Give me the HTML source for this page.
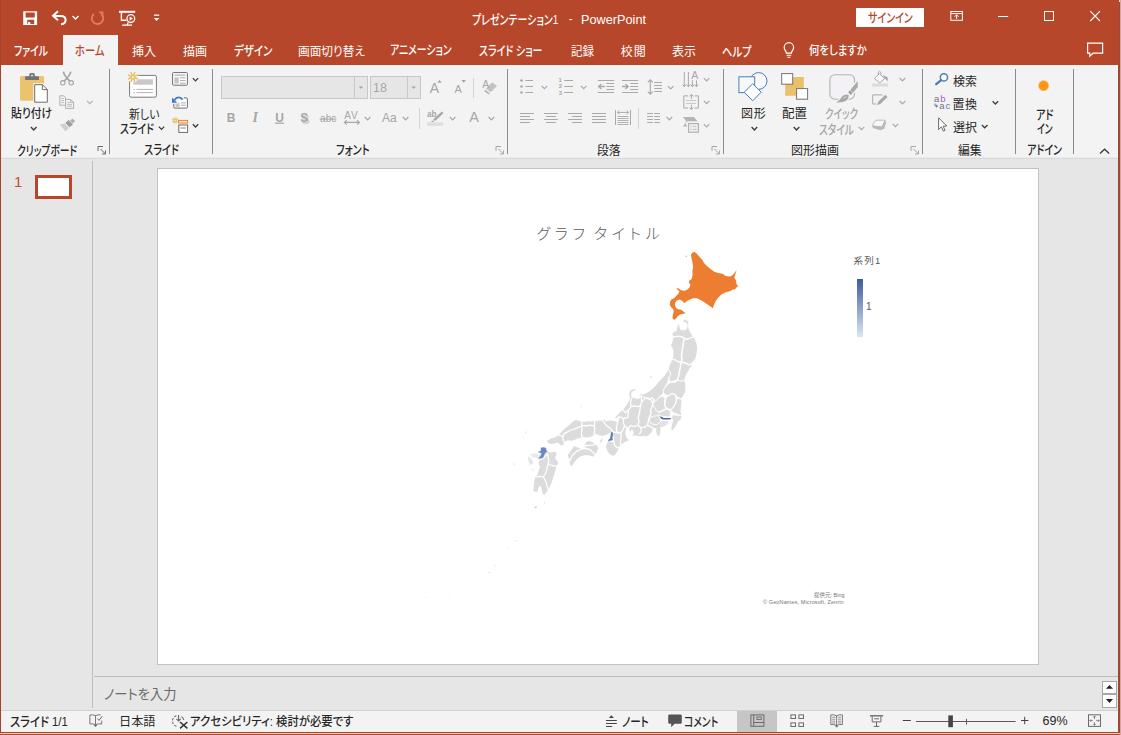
<!DOCTYPE html>
<html lang="ja">
<head>
<meta charset="utf-8">
<title>プレゼンテーション1 - PowerPoint</title>
<style>
html,body{margin:0;padding:0;background:#e6e6e6;}
body{width:1121px;height:735px;overflow:hidden;font-family:"Liberation Sans","Noto Sans CJK JP",sans-serif;}
#app{position:relative;width:1121px;height:735px;overflow:hidden;background:#e6e6e6;}
#app div,#app svg{position:absolute;}
.t{position:absolute;line-height:20px;font-weight:500;white-space:pre;transform-origin:0 0;font-feature-settings:"palt";}
#titlebar{left:0;top:0;width:1119px;height:65px;background:#b7472a;}
#tedge{left:1119px;top:2px;width:1px;height:63px;background:#9c4a36;}
#hometab{left:63px;top:35px;width:55px;height:31px;background:#f3f3f3;}
#ribbon{left:1px;top:65px;width:1117px;height:92px;background:#f3f3f3;}
#ribbonline{left:1px;top:157px;width:1117px;height:2px;background:#dadada;border-top:1px solid #ececec;box-sizing:border-box;}
.vsep{width:1px;top:69px;height:85px;background:#8a8a8a;}
.tsep{width:1px;background:#d4d4d4;}
#signin{left:856px;top:8px;width:68px;height:19px;background:#fff;}
#fontbox{left:221px;top:76px;width:147px;height:23px;background:#e6e6e6;border:1px solid #c8c8c8;box-sizing:border-box;}
#sizebox{left:370px;top:76px;width:51px;height:23px;background:#e6e6e6;border:1px solid #c8c8c8;box-sizing:border-box;}
#paneline{left:92px;top:161px;width:1px;height:547px;background:#bdbdbd;}
#slide{left:157px;top:168px;width:882px;height:497px;background:#fff;border:1px solid #c2c2c2;box-sizing:border-box;}
#thumb{left:35px;top:175px;width:37px;height:24px;background:#fff;border:3px solid #b7472a;box-sizing:border-box;}
#notesline{left:94px;top:676px;width:1024px;height:1px;background:#bdbdbd;}
#statusbar{left:1px;top:710px;width:1117px;height:22px;background:#f3f3f3;border-top:1px solid #d0d0d0;box-sizing:border-box;}
#viewsel{left:737px;top:711px;width:40px;height:21px;background:#c6c6c6;}
.sbtn{left:1102px;width:15px;background:#fff;border:1px solid #a8a8a8;box-sizing:border-box;}
#bl{left:0;top:0;width:1px;height:735px;background:#a8412a;}
#br{left:1118px;top:65px;width:2px;height:670px;background:#a4452f;}
#bb1{left:0;top:732px;width:1120px;height:1px;background:#a8452c;}
#bb2{left:0;top:733px;width:1120px;height:1px;background:#efc9ad;}
#bb3{left:0;top:734px;width:1120px;height:1px;background:#b0482d;}
#edge{left:1120px;top:0;width:1px;height:735px;background:#cdaaa4;}
</style>
</head>
<body>
<div id="app">
<div id="titlebar"></div>
<div id="tedge"></div>
<div id="hometab"></div>
<div id="ribbon"></div>
<div id="ribbonline"></div>
<div class="vsep" style="left:109px"></div>
<div class="vsep" style="left:212px"></div>
<div class="vsep" style="left:507px"></div>
<div class="vsep" style="left:723px"></div>
<div class="vsep" style="left:922px"></div>
<div class="vsep" style="left:1015px"></div>
<div class="vsep" style="left:1073px"></div>
<div class="tsep" style="left:473px;top:78px;height:20px"></div>
<div class="tsep" style="left:419px;top:108px;height:21px"></div>
<div class="tsep" style="left:638px;top:108px;height:21px"></div>
<div id="signin"></div>
<div id="fontbox"></div>
<div id="sizebox"></div>
<div id="paneline"></div>
<div id="slide"></div>
<div id="thumb"></div>
<div id="notesline"></div>
<div id="statusbar"></div>
<div id="viewsel"></div>
<div class="sbtn" style="top:681px;height:13px"></div>
<div class="sbtn" style="top:694px;height:14px"></div>
<svg width="1121" height="735" viewBox="0 0 1121 735" style="left:0;top:0">
<path d="M657.0 388.8L649.3 392.8L643.8 394.0L641.2 397.2L637.9 399.1L634.1 398.1L631.4 398.3L631.6 396.6L631.0 393.6L632.7 391.3L635.2 390.0L635.5 388.6L631.7 389.8L629.5 391.7L629.3 394.5L630.1 398.3L628.9 400.7L627.4 404.0L624.6 407.4L623.1 410.0L620.8 411.7L618.7 413.6L616.5 416.0L615.0 417.9L616.5 418.5L618.1 420.4L616.5 421.7L614.1 421.0L611.2 420.4L608.4 420.8L605.5 421.4L604.8 419.5L602.7 420.7L599.8 420.4L596.0 421.2L594.8 420.2L591.9 421.4L588.1 421.2L584.3 421.7L581.9 422.1L578.6 420.7L575.7 420.0L573.3 421.2L571.4 423.1L569.0 425.5L566.2 427.4L563.3 429.8L561.0 432.6L559.0 435.0L556.7 436.4L553.8 437.9L551.0 438.3L550.0 439.3L547.0 440.7L548.1 443.1L551.0 444.0L554.8 443.6L557.6 442.6L560.5 445.0L562.9 445.5L564.3 441.7L568.1 440.2L571.9 440.7L574.8 439.8L578.6 438.3L581.4 437.4L582.9 436.9L586.2 437.4L590.0 436.9L593.3 435.5L595.7 433.6L599.5 435.5L603.3 436.0L607.1 434.5L608.6 433.6L611.3 432.2L610.8 433.6L610.6 436.3L609.9 438.7L608.2 440.1L608.1 441.1L607.2 443.1L605.9 446.5L606.9 449.9L609.6 454.0L613.0 455.9L615.7 454.0L617.8 450.6L620.5 445.2L624.6 441.9L629.0 440.2L626.6 437.7L625.3 433.6L625.9 429.5L627.0 427.5L628.7 427.1L630.0 432.6L631.0 430.2L632.4 429.5L634.1 432.9L632.1 435.3L636.8 435.8L639.5 436.2L643.6 436.3L647.7 436.1L650.5 433.5L652.0 431.0L653.8 427.8L656.5 428.5L656.0 431.0L657.0 434.5L658.5 436.7L660.0 434.0L660.5 430.0L660.3 427.5L660.0 414.0L657.0 400.0z" fill="#dcdcdc" stroke="none" stroke-width="0" stroke-linejoin="round"/>
<path d="M567.8 454.9L570.1 452.0L572.4 448.5L574.2 446.0L577.6 447.4L580.5 448.8L583.4 447.9L585.1 445.3L585.7 442.2L588.6 441.0L592.7 442.2L594.4 444.5L597.3 445.6L598.1 448.5L596.7 452.0L595.0 454.9L592.7 456.8L590.7 455.7L585.7 455.0L580.8 456.2L577.1 458.9L573.8 463.1L571.5 466.4L570.1 464.7L569.2 461.8L570.3 459.5L568.4 457.8z" fill="#dcdcdc" stroke="none" stroke-width="0" stroke-linejoin="round"/>
<path d="M545.7 447.4L548.1 451.7L551.0 452.6L554.8 451.7L556.7 453.1L555.7 456.4L554.8 457.9L557.6 461.2L558.1 464.0L555.7 466.0L556.2 467.9L554.8 472.6L553.3 477.4L551.9 482.1L550.0 486.0L548.6 488.8L546.7 491.7L544.3 495.0L542.4 493.6L541.9 489.8L540.5 486.0L538.6 486.9L537.6 491.7L534.8 491.7L533.3 490.7L533.8 486.0L534.3 480.2L535.7 476.9L537.6 474.5L538.6 470.7L540.0 466.9L538.6 463.1L539.5 460.2L538.1 457.9L538.6 455.5L540.5 453.6L540.5 447.9L542.9 446.9z" fill="#dcdcdc" stroke="none" stroke-width="0" stroke-linejoin="round"/>
<path d="M660.0 421.3L664.0 421.0L667.9 421.0L667.8 424.3L665.0 425.8L662.0 427.3L660.0 426.8L659.5 424.5z" fill="#e2e2e2" stroke="none" stroke-width="0" stroke-linejoin="round"/>
<path d="M530.5 454.5L532.9 453.6L537.1 453.6L538.3 455.5L538.1 457.9L534.8 457.4L531.4 456.9z" fill="#e9e9e9" stroke="none" stroke-width="0" stroke-linejoin="round"/>
<path d="M528.1 456.4L530.0 457.4L531.4 459.3L533.3 461.7L532.4 464.0L530.5 465.0L529.0 463.1L528.1 460.2z" fill="#e6e6e6" stroke="none" stroke-width="0" stroke-linejoin="round"/>
<path d="M694.4 251.7L696.9 253.7L699.6 257.0L702.3 259.7L704.0 263.0L707.2 266.2L710.5 268.9L714.3 271.7L718.1 273.1L722.5 273.8L725.7 276.0L730.1 276.6L732.8 274.9L735.0 272.2L736.6 270.0L735.5 273.8L734.4 277.6L736.1 280.9L736.6 284.2L738.2 286.3L736.1 287.7L735.0 289.6L732.8 289.4L730.1 291.2L725.7 292.3L721.4 294.5L718.1 297.8L715.4 301.6L713.8 305.4L712.9 308.3L710.5 306.5L707.2 304.3L704.0 302.1L700.7 300.0L696.9 298.3L693.1 298.3L689.8 299.4L687.1 301.0L684.4 302.9L682.2 300.7L679.5 299.6L676.8 300.5L675.1 302.7L674.9 305.4L676.2 308.1L678.4 309.2L681.1 309.7L683.5 311.6L685.5 313.3L682.7 314.1L680.0 314.6L677.9 316.3L675.7 318.8L674.0 319.9L672.4 317.9L673.0 314.6L673.7 311.4L673.3 309.2L671.3 307.6L669.7 304.8L670.2 301.6L671.3 299.4L674.0 298.3L676.2 296.1L678.4 293.4L679.5 291.2L677.3 289.6L676.2 288.5L678.4 288.3L681.1 290.2L684.4 290.7L687.6 289.6L689.8 286.9L690.4 284.2L688.7 282.5L689.3 280.4L691.5 279.3L692.5 275.5L692.5 271.1L693.1 266.8L692.5 262.4L691.5 258.1L690.9 254.8L692.5 252.8z" fill="#ed7d31" stroke="none" stroke-width="0" stroke-linejoin="round"/>
<circle cx="686.3" cy="256.2" r="0.7" fill="#ed7d31" opacity="0.7"/>
<path d="M677.6 324.3L679.8 324.7L680.0 327.9L681.4 330.0L683.3 329.3L684.8 330.2L686.7 328.3L687.3 324.5L685.7 322.6L683.3 322.4L682.9 320.2L684.8 319.0L688.6 320.9L688.8 323.6L688.6 327.4L690.0 331.2L691.9 334.5L693.3 336.7L690.5 337.9L686.7 339.0L684.6 338.1L682.9 336.9L678.1 336.0L673.1 336.7L671.9 334.0L672.9 332.1L676.2 330.7L676.7 327.4z" fill="#dcdcdc" stroke="#fff" stroke-width="0.9" stroke-linejoin="round"/>
<path d="M673.1 337.1L678.1 336.4L682.9 337.5L684.0 338.6L683.1 342.6L682.4 347.4L681.7 352.1L681.2 356.0L681.6 359.8L680.8 361.7L678.1 361.4L675.2 359.6L672.1 358.8L672.9 355.0L673.0 351.2L671.9 347.4L670.3 345.3L671.4 343.6L672.4 340.0z" fill="#dcdcdc" stroke="#fff" stroke-width="0.9" stroke-linejoin="round"/>
<path d="M684.8 338.8L686.9 339.4L690.5 338.2L693.5 337.1L695.4 339.6L696.9 343.6L697.7 347.4L697.3 351.7L696.4 356.0L695.8 358.8L693.9 360.7L692.6 362.6L689.7 364.7L686.7 363.3L683.8 362.3L681.5 361.9L682.4 359.8L681.9 356.0L682.4 352.1L683.0 347.4L683.8 342.6z" fill="#dcdcdc" stroke="#fff" stroke-width="0.9" stroke-linejoin="round"/>
<path d="M671.7 359.4L675.0 360.1L677.9 362.0L680.6 362.6L680.2 366.4L679.2 371.2L678.3 376.0L677.0 379.8L671.4 381.7L669.0 380.5L669.3 376.0L670.7 372.7L667.8 370.0L669.5 364.5L671.0 361.4z" fill="#dcdcdc" stroke="#fff" stroke-width="0.9" stroke-linejoin="round"/>
<path d="M681.3 362.6L683.8 362.9L686.7 364.0L689.5 365.5L692.2 363.8L692.0 366.9L689.7 368.3L688.8 371.2L686.7 374.0L685.3 377.9L684.8 381.7L685.0 383.4L681.0 381.7L677.7 380.5L678.9 376.0L679.8 371.2L680.8 366.4z" fill="#dcdcdc" stroke="#fff" stroke-width="0.9" stroke-linejoin="round"/>
<path d="M663.8 389.0L667.6 384.3L671.0 382.2L675.4 382.6L677.7 380.3L681.0 381.2L685.0 380.7L685.7 384.3L685.9 389.0L685.0 392.9L682.7 397.1L681.7 398.8L677.6 397.6L675.4 394.6L671.9 393.3L668.6 395.5L665.0 395.0L663.3 392.4z" fill="#dcdcdc" stroke="#fff" stroke-width="0.9" stroke-linejoin="round"/>
<path d="M677.3 398.2L681.9 399.3L681.9 403.3L681.2 408.1L681.0 411.9L682.2 415.7L678.1 414.6L674.3 413.0L670.7 410.8L673.3 407.6L675.8 403.3L676.6 399.5z" fill="#dcdcdc" stroke="#fff" stroke-width="0.9" stroke-linejoin="round"/>
<path d="M668.6 395.9L671.9 393.8L675.2 395.0L676.2 398.6L675.4 403.3L673.0 407.3L670.3 409.8L667.1 408.1L665.0 405.4L665.5 400.5L666.2 397.6z" fill="#dcdcdc" stroke="#fff" stroke-width="0.9" stroke-linejoin="round"/>
<path d="M652.4 403.3L655.2 401.4L659.0 397.6L662.9 396.2L665.0 398.1L664.6 401.4L664.4 405.7L666.2 408.6L662.9 410.0L659.0 411.9L656.2 411.0L655.2 407.6L652.9 406.2z" fill="#dcdcdc" stroke="#fff" stroke-width="0.9" stroke-linejoin="round"/>
<path d="M659.5 412.4L663.3 410.5L666.7 409.0L670.0 410.5L670.7 413.8L669.5 417.1L665.7 416.7L661.4 416.2L658.1 414.8z" fill="#dcdcdc" stroke="#fff" stroke-width="0.9" stroke-linejoin="round"/>
<path d="M671.4 417.6L672.9 414.8L678.1 415.2L682.4 416.2L681.0 419.5L678.1 421.9L676.7 425.2L674.8 428.1L672.4 430.5L671.0 431.0L671.0 427.1L671.9 423.3L672.9 420.5z" fill="#dcdcdc" stroke="#fff" stroke-width="0.9" stroke-linejoin="round"/>
<path d="M650.0 417.6L653.3 416.2L657.6 415.7L660.0 417.6L660.5 420.5L659.0 423.3L656.2 424.8L653.3 424.3L650.5 423.3L649.5 420.5z" fill="#dcdcdc" stroke="#fff" stroke-width="0.9" stroke-linejoin="round"/>
<path d="M667.6 370.0L669.0 370.0L670.7 374.3L668.6 378.1L667.8 382.4L663.8 389.0L663.1 393.8L659.0 397.4L655.7 401.0L652.2 402.9L649.5 398.1L645.7 397.6L641.9 396.2L638.1 395.5L639.0 394.3L643.8 393.8L648.6 391.4L652.4 388.6L656.2 384.8L658.6 381.4L662.4 377.6L665.7 373.8z" fill="#dcdcdc" stroke="#fff" stroke-width="0.9" stroke-linejoin="round"/>
<path d="M659.5 416.5L661.4 416.7L663.8 417.9L667.6 418.0L671.0 417.9L670.7 419.3L667.6 419.5L663.8 419.6L661.4 419.0z" fill="#4a68a8" stroke="none" stroke-width="0" stroke-linejoin="round"/>
<path d="M641.2 397.2L641.7 401.7L640.6 405.2L637.9 406.7L634.1 405.8L631.2 406.7" fill="none" stroke="#fff" stroke-width="1.3" stroke-linejoin="round"/>
<path d="M631.4 398.3L630.5 403.1L631.2 406.7L628.4 410.0L625.5 412.6L623.0 410.1" fill="none" stroke="#fff" stroke-width="1.3" stroke-linejoin="round"/>
<path d="M628.4 410.0L627.9 417.4L623.4 418.5L621.0 417.4L618.9 416.9L617.1 418.5L616.5 421.7" fill="none" stroke="#fff" stroke-width="1.3" stroke-linejoin="round"/>
<path d="M640.6 405.2L640.0 409.3L639.3 413.6L638.1 417.4L639.0 421.2L638.1 425.2" fill="none" stroke="#fff" stroke-width="1.3" stroke-linejoin="round"/>
<path d="M641.7 401.7L645.5 397.9L649.3 399.5L652.2 397.9L654.3 400.2L653.1 400.7L652.4 406.0L650.5 410.0L651.0 413.6L649.3 417.4L648.2 421.2L647.6 425.2" fill="none" stroke="#fff" stroke-width="1.3" stroke-linejoin="round"/>
<path d="M638.1 425.2L640.8 427.7L644.1 427.4L647.6 425.2L651.2 426.9L654.3 429.6" fill="none" stroke="#fff" stroke-width="1.3" stroke-linejoin="round"/>
<path d="M638.1 425.2L634.1 426.7L630.8 425.5L629.3 427.6L628.4 428.3" fill="none" stroke="#fff" stroke-width="1.3" stroke-linejoin="round"/>
<path d="M640.8 427.7L641.2 431.2L639.3 434.5" fill="none" stroke="#fff" stroke-width="1.3" stroke-linejoin="round"/>
<path d="M623.4 418.5L623.4 423.1L624.6 426.1L628.4 428.3L626.3 429.8" fill="none" stroke="#fff" stroke-width="1.3" stroke-linejoin="round"/>
<path d="M624.6 426.1L623.1 429.6L621.2 432.4" fill="none" stroke="#fff" stroke-width="1.3" stroke-linejoin="round"/>
<path d="M618.9 416.9L616.5 426.9L616.5 430.9L618.7 433.1L621.2 432.4L621.0 438.3L620.3 443.1L621.5 446.4" fill="none" stroke="#fff" stroke-width="1.3" stroke-linejoin="round"/>
<path d="M603.1 421.0L605.0 424.0L607.0 426.1L609.8 427.7L611.7 429.8L613.6 432.1L616.0 432.6L618.7 433.1" fill="none" stroke="#fff" stroke-width="1.3" stroke-linejoin="round"/>
<path d="M613.1 436.4L613.6 441.2L615.0 446.0L617.9 447.9L620.6 446.9" fill="none" stroke="#fff" stroke-width="1.3" stroke-linejoin="round"/>
<path d="M610.3 441.4L613.6 441.4" fill="none" stroke="#fff" stroke-width="1.3" stroke-linejoin="round"/>
<path d="M594.8 420.4L594.6 424.0L594.3 426.0L594.8 429.8L594.0 433.6L594.3 434.7" fill="none" stroke="#fff" stroke-width="1.3" stroke-linejoin="round"/>
<path d="M594.3 426.0L590.0 425.2L586.2 426.0L581.9 425.5L581.9 422.3" fill="none" stroke="#fff" stroke-width="1.3" stroke-linejoin="round"/>
<path d="M581.9 425.5L581.9 429.8L581.4 433.6L582.2 437.2" fill="none" stroke="#fff" stroke-width="1.3" stroke-linejoin="round"/>
<path d="M581.9 425.5L578.6 427.4L574.8 428.8L571.0 430.0L567.1 432.1L564.3 433.6L562.9 436.4L560.0 435.5L558.8 435.3" fill="none" stroke="#fff" stroke-width="1.3" stroke-linejoin="round"/>
<path d="M562.9 436.4L563.3 440.2L564.3 442.0" fill="none" stroke="#fff" stroke-width="1.3" stroke-linejoin="round"/>
<path d="M547.6 453.6L548.1 457.4L549.0 461.2L548.1 464.0L551.9 465.5L555.9 466.1" fill="none" stroke="#fff" stroke-width="1.3" stroke-linejoin="round"/>
<path d="M548.1 464.0L547.1 467.9L546.2 471.7L544.8 474.5L543.3 476.9L539.5 476.4L536.2 476.9" fill="none" stroke="#fff" stroke-width="1.3" stroke-linejoin="round"/>
<path d="M543.3 476.9L545.2 480.2L546.7 484.0L547.6 487.9L548.3 489.8" fill="none" stroke="#fff" stroke-width="1.3" stroke-linejoin="round"/>
<path d="M539.5 460.0L543.3 458.5L547.6 453.6" fill="none" stroke="#fff" stroke-width="1.3" stroke-linejoin="round"/>
<path d="M611.3 432.2L613.0 432.6L612.7 435.6L612.3 438.4L612.9 439.7L611.0 440.4L608.1 440.7L608.2 440.1L609.9 438.7L610.6 436.3L610.8 433.6z" fill="#5b7cb8" stroke="none" stroke-width="0" stroke-linejoin="round"/>
<path d="M540.5 447.7L542.9 446.9L546.0 447.4L546.7 450.2L547.9 451.9L546.0 452.6L544.8 454.5L543.5 457.9L541.4 458.5L538.6 459.3L538.1 458.1L540.3 456.0L541.2 453.4L539.0 452.8L537.1 452.4L538.6 451.3L540.5 450.7z" fill="#6888c0" stroke="#fff" stroke-width="0.6" stroke-linejoin="round"/>
<path d="M584.9 445.6L589.8 445.3L594.6 444.8" fill="none" stroke="#fff" stroke-width="1.3" stroke-linejoin="round"/>
<path d="M569.2 461.8L572.4 455.5L576.8 451.1L582.3 448.9L585.1 448.5L584.9 445.6" fill="none" stroke="#fff" stroke-width="1.3" stroke-linejoin="round"/>
<path d="M585.1 448.5L589.8 449.5L593.8 453.2L595.0 454.9" fill="none" stroke="#fff" stroke-width="1.3" stroke-linejoin="round"/>
<ellipse cx="601.3" cy="440.7" rx="0.9" ry="2.1" fill="#dcdcdc" transform="rotate(25 601.3 440.7)"/>
<ellipse cx="535.7" cy="507.3" rx="1.3" ry="1.1" fill="#d4d4d4" opacity="0.9"/>
<ellipse cx="544.4" cy="503" rx="0.6" ry="1.2" fill="#d4d4d4" opacity="0.5"/>
<ellipse cx="515.7" cy="540.6" rx="1.2" ry="0.7" fill="#d4d4d4" opacity="0.5"/>
<ellipse cx="508.6" cy="548.6" rx="0.8" ry="0.6" fill="#d4d4d4" opacity="0.4"/>
<ellipse cx="495.7" cy="565.7" rx="0.9" ry="0.7" fill="#d4d4d4" opacity="0.45"/>
<ellipse cx="489" cy="572.6" rx="1.3" ry="0.8" fill="#d4d4d4" opacity="0.5"/>
<ellipse cx="425.7" cy="597.1" rx="1" ry="0.6" fill="#d4d4d4" opacity="0.35"/>
<ellipse cx="448.6" cy="594.3" rx="0.9" ry="0.5" fill="#d4d4d4" opacity="0.3"/>
<ellipse cx="514.3" cy="464.3" rx="1" ry="1.2" fill="#d4d4d4" opacity="0.35"/>
<ellipse cx="581.4" cy="406.5" rx="1" ry="0.8" fill="#d4d4d4" opacity="0.4"/>
<ellipse cx="525.8" cy="432.5" rx="0.7" ry="1.8" fill="#d4d4d4" opacity="0.4"/>
<ellipse cx="523.5" cy="437.5" rx="0.6" ry="1" fill="#d4d4d4" opacity="0.3"/>
<ellipse cx="651" cy="377.2" rx="0.9" ry="1.8" fill="#d4d4d4" opacity="0.45"/>
<ellipse cx="529" cy="465" rx="0.7" ry="0.7" fill="#d4d4d4" opacity="0.3"/>
<ellipse cx="533" cy="470" rx="0.8" ry="1.2" fill="#d4d4d4" opacity="0.4"/>
<ellipse cx="531.5" cy="459.5" rx="0.7" ry="0.7" fill="#d4d4d4" opacity="0.3"/>
<defs><linearGradient id="lg" x1="0" y1="0" x2="0" y2="1"><stop offset="0" stop-color="#3b5c9f"/><stop offset="1" stop-color="#dde5f3"/></linearGradient></defs><rect x="857" y="279" width="6" height="58" fill="url(#lg)"/>
</svg>
<svg width="1121" height="735" viewBox="0 0 1121 735" style="left:0;top:0">
<path d="M23.2 11.2h13.9v13.9h-13.9z M25.6 12.4v5h9.2v-5z M27.3 19.8v4.3h6.9v-4.3z" fill="#fff" fill-rule="evenodd"/>
<rect x="28.1" y="22" width="2.2" height="2.2" fill="#fff"/>
<path d="M58 11.3L53 15.8L58 20.2" fill="none" stroke="#fff" stroke-width="2" stroke-linejoin="miter"/>
<path d="M53.6 15.9H60.6C64 15.9 65.6 17.8 65.6 20C65.6 22.2 64 24 61 24.3" fill="none" stroke="#fff" stroke-width="2"/>
<path d="M72.5 16.0L75.5 19.0L78.5 16.0" fill="none" stroke="#fff" stroke-width="1.4"/>
<path d="M93.9 13.9A5.7 5.7 0 1 0 101.6 14.3" fill="none" stroke="#e27a60" stroke-width="1.9"/>
<path d="M98.4 11.6H103.4V16.6z" fill="#e27a60"/>
<path d="M119 11.8H135.2" stroke="#fff" stroke-width="2" fill="none"/>
<path d="M121.4 12.5V20.2H126.5" stroke="#fff" stroke-width="1.4" fill="none"/>
<circle cx="130.8" cy="18.6" r="3.9" fill="none" stroke="#fff" stroke-width="1.3"/>
<path d="M129.6 16.4L133 18.6L129.6 20.8z" fill="#fff"/>
<path d="M128.2 22.6L127 25.2 M122.2 25.2H132" stroke="#fff" stroke-width="1.3" fill="none"/>
<path d="M154 15.2H159.2" stroke="#fff" stroke-width="1.3"/><path d="M153.8 17.9H159.4L156.6 21.1z" fill="#fff"/>
<rect x="950.8" y="11.5" width="11.6" height="8.8" fill="none" stroke="#fff" stroke-width="1"/>
<path d="M950.8 13.6H962.4 M956.6 19V15 M954.6 16.8L956.6 14.8L958.6 16.8" fill="none" stroke="#fff" stroke-width="1"/>
<path d="M998 16.5H1008.2" stroke="#fff" stroke-width="1"/>
<rect x="1044.5" y="11.5" width="9" height="9" fill="none" stroke="#fff" stroke-width="1"/>
<path d="M1090.2 11.2L1100 21 M1100 11.2L1090.2 21" stroke="#fff" stroke-width="1.1"/>
<path d="M1087.6 43.2H1102.6V53.2H1093L1089.8 56.2V53.2H1087.6z" fill="none" stroke="#fff" stroke-width="1.2"/>
<path d="M786.4 53.2C786.4 51 784.2 50.2 784.2 47.4A4.7 4.7 0 0 1 793.6 47.4C793.6 50.2 791.4 51 791.4 53.2z" fill="none" stroke="#fff" stroke-width="1.2"/>
<path d="M786.6 55.2H791.2 M787.4 57.2H790.4" stroke="#fff" stroke-width="1.1"/>
<rect x="20" y="75.9" width="24.1" height="24.9" rx="1.6" fill="#ebc36f"/>
<path d="M25.1 80V77.2Q25.1 76.2 26.1 76.2H29.3V74.6Q29.3 73.1 30.8 73.1H33.3Q34.8 73.1 34.8 74.6V76.2H38Q39 76.2 39 77.2V80z" fill="#737373"/>
<circle cx="32" cy="75.5" r="1" fill="#ebe6dc"/>
<path d="M33.2 83.2H43L48.8 89V103.7H33.2z" fill="#f3f3f3"/>
<path d="M34.7 84.7H42.4L47.3 89.6V102.2H34.7z" fill="#fff" stroke="#6d6d6d" stroke-width="1"/>
<path d="M42.4 84.7V89.6H47.3" fill="none" stroke="#6d6d6d" stroke-width="1"/>
<path d="M30.9 127.1L33.7 129.9L36.5 127.1" fill="none" stroke="#3b3b3b" stroke-width="1.4"/>
<circle cx="62.8" cy="82.8" r="2.2" fill="none" stroke="#a6a6a6" stroke-width="1.1"/><circle cx="71.2" cy="82.8" r="2.2" fill="none" stroke="#a6a6a6" stroke-width="1.1"/>
<path d="M63.4 71.6Q64 75.5 69.8 81.2 M70.8 71.6Q70 75.5 64.2 81.2" fill="none" stroke="#a6a6a6" stroke-width="1.7"/>
<path d="M59.8 95.8H63.6L65.6 97.8V105.2H59.8z" fill="#f3f3f3" stroke="#b0b0b0" stroke-width="1"/>
<path d="M61.3 98.5H64 M61.3 100.5H64 M61.3 102.5H64" stroke="#b8b8b8" stroke-width="0.9"/>
<path d="M65.6 99.4H70.6L73.6 102.4V108.4H65.6z" fill="#f3f3f3" stroke="#b0b0b0" stroke-width="1"/>
<path d="M70.6 99.4V102.4H73.6" fill="none" stroke="#b0b0b0" stroke-width="0.9"/>
<path d="M67.3 102.6H70 M67.3 104.4H72 M67.3 106.2H72" stroke="#b8b8b8" stroke-width="0.9"/>
<path d="M87.0 100.8L89.8 103.6L92.6 100.8" fill="none" stroke="#b0b0b0" stroke-width="1.2"/>
<path d="M72.4 118.4L75.2 121L72.8 123.4L70 120.8z" fill="#b0b0b0"/>
<path d="M68.6 120L73 124.4L69.4 127.2L65.4 123z" fill="#9d9d9d"/>
<path d="M64.6 123.6L68.8 128L65.6 131.6L59.8 124.6z" fill="#cfcfcf"/>
<path d="M98 151V146.5H103 M100.5 149L105.5 154 M102 154H105.5V150.5" fill="none" stroke="#6a6a6a" stroke-width="1"/>
<rect x="129.6" y="75.4" width="26.8" height="21.8" rx="1.6" fill="#fff" stroke="#7a7a7a" stroke-width="1"/>
<rect x="133.3" y="79.3" width="19.6" height="5.4" fill="#c8c8c8"/>
<path d="M133.4 89.4H135 M136.4 89.4H152.9 M133.4 92.6H135 M136.4 92.6H152.9" stroke="#b4b4b4" stroke-width="1"/>
<circle cx="132.9" cy="77" r="5.6" fill="#f3f3f3"/>
<path d="M134.47 77.65L137.80 79.03M133.55 78.57L134.93 81.90M132.25 78.57L130.87 81.90M131.33 77.65L128.00 79.03M131.33 76.35L128.00 74.97M132.25 75.43L130.87 72.10M133.55 75.43L134.93 72.10M134.47 76.35L137.80 74.97" stroke="#e8c16b" stroke-width="1.5" fill="none"/>
<circle cx="132.9" cy="77" r="1.7" fill="none" stroke="#e8c16b" stroke-width="1.35"/>
<path d="M158.8 126.6L161.5 129.4L164.2 126.6" fill="none" stroke="#3b3b3b" stroke-width="1.3"/>
<rect x="172.6" y="72.6" width="14.8" height="12.6" rx="0.8" fill="#fff" stroke="#6d6d6d" stroke-width="1"/>
<rect x="174.4" y="74.4" width="11.2" height="1.7" fill="#c4c4c4"/><rect x="174.4" y="77.4" width="4.3" height="6.2" fill="#c4c4c4"/>
<path d="M180 77.8H185.6 M180 80.6H185.6 M180 83.2H185.6" stroke="#a0a0a0" stroke-width="0.9"/>
<path d="M192.8 78.1L195.5 80.9L198.2 78.1" fill="none" stroke="#3b3b3b" stroke-width="1.3"/>
<rect x="173.8" y="97.9" width="13.6" height="10.2" rx="0.8" fill="#fff" stroke="#6d6d6d" stroke-width="1"/>
<rect x="175.4" y="102.7" width="4.2" height="4.2" fill="#c4c4c4"/>
<path d="M181 102.9H185.8 M181 105.2H185.8" stroke="#a0a0a0" stroke-width="0.9"/>
<path d="M171 95.6H184V100.6H178V103.8H171z" fill="#f3f3f3"/>
<path d="M182.6 99.6C180.6 96.6 176.6 96.4 174.6 100" fill="none" stroke="#3c78c8" stroke-width="1.8"/>
<path d="M172 97.6V102.8H177.2z" fill="#3c78c8"/>
<path d="M176.22 120.92L178.34 121.80M175.62 121.52L176.50 123.64M174.78 121.52L173.90 123.64M174.18 120.92L172.06 121.80M174.18 120.08L172.06 119.20M174.78 119.48L173.90 117.36M175.62 119.48L176.50 117.36M176.22 120.08L178.34 119.20" stroke="#e8c16b" stroke-width="1.1" fill="none"/>
<circle cx="175.2" cy="120.5" r="1.1" fill="none" stroke="#e8c16b" stroke-width="0.99"/>
<rect x="178.6" y="120.4" width="9" height="2.6" fill="#fdeebb" stroke="#e8823a" stroke-width="1"/>
<rect x="178.8" y="125" width="8.8" height="7.4" fill="#fff" stroke="#6d6d6d" stroke-width="1"/>
<rect x="180.4" y="127" width="5.6" height="2" fill="#c4c4c4"/>
<path d="M192.8 124.2L195.5 127.0L198.2 124.2" fill="none" stroke="#3b3b3b" stroke-width="1.3"/>
<path d="M358.6 86.4H363.2L360.9 88.9z" fill="#a6a6a6"/><path d="M354.5 77V98" stroke="#c8c8c8" stroke-width="1"/>
<path d="M411.4 86.4H416L413.7 88.9z" fill="#a6a6a6"/><path d="M407.5 77V98" stroke="#c8c8c8" stroke-width="1"/>
<path d="M274.9 123.2H284" stroke="#a6a6a6" stroke-width="1.2"/>
<path d="M319.6 119.1H336.4" stroke="#a6a6a6" stroke-width="1"/>
<path d="M344.4 122.4H359.4 M346.8 120.2L344.4 122.4L346.8 124.6 M357 120.2L359.4 122.4L357 124.6" fill="none" stroke="#a6a6a6" stroke-width="1.1"/>
<path d="M364.8 117.0L367.6 119.8L370.4 117.0" fill="none" stroke="#a6a6a6" stroke-width="1.2"/>
<path d="M402.8 117.0L405.6 119.8L408.4 117.0" fill="none" stroke="#a6a6a6" stroke-width="1.2"/>
<path d="M437.2 82.7L439.55 80L441.9 82.7z" fill="#a6a6a6"/>
<path d="M461.3 80L466 80L463.65 82.7z" fill="#a6a6a6"/>
<path d="M492.2 82.3L497 86L490.6 92.2L486 88.6z" fill="#c2c2c2"/>
<path d="M485.4 89.8L489.8 93.4L488.6 94.6L484.2 91z" fill="#b4b4b4"/>
<path d="M441.8 111.6L443.4 113.2L435 121L433.2 119.4z" fill="#a6a6a6"/><path d="M432.6 120.2L434.4 121.8L431 122z" fill="#a6a6a6"/>
<rect x="427.2" y="122.4" width="15.8" height="3.4" fill="#dedede"/>
<path d="M449.8 117.0L452.6 119.8L455.4 117.0" fill="none" stroke="#a6a6a6" stroke-width="1.2"/>
<path d="M488.6 117.0L491.4 119.8L494.2 117.0" fill="none" stroke="#a6a6a6" stroke-width="1.2"/>
<path d="M496 151V146.5H501 M498.5 149L503.5 154 M500 154H503.5V150.5" fill="none" stroke="#a6a6a6" stroke-width="1"/>
<circle cx="521.5" cy="80.5" r="1.3" fill="#a9a9a9"/>
<circle cx="521.5" cy="86.5" r="1.3" fill="#a9a9a9"/>
<circle cx="521.5" cy="92.5" r="1.3" fill="#a9a9a9"/>
<path d="M525.4 80.5H533 M525.4 86.5H533 M525.4 92.5H533" stroke="#a9a9a9" stroke-width="1"/>
<path d="M541.6 85.8L544.4 88.6L547.2 85.8" fill="none" stroke="#a9a9a9" stroke-width="1.2"/>
<path d="M564.2 80.5H573 M564.2 86.5H573 M564.2 92.5H573" stroke="#a9a9a9" stroke-width="1"/>
<path d="M580.9 85.8L583.7 88.6L586.5 85.8" fill="none" stroke="#a9a9a9" stroke-width="1.2"/>
<path d="M597.8 80.5H614.2 M597.8 92.5H614.2" stroke="#a9a9a9" stroke-width="1"/>
<path d="M606.3 83.5H614.2 M606.3 86.5H614.2 M606.3 89.5H614.2" stroke="#a9a9a9" stroke-width="1"/>
<path d="M604.8 86.5H598.8 M601.4 83.9L598.6 86.5L601.4 89.1" fill="none" stroke="#a9a9a9" stroke-width="1.3"/>
<path d="M622 80.5H638.2 M622 92.5H638.2" stroke="#a9a9a9" stroke-width="1"/>
<path d="M630.2 83.5H638.2 M630.2 86.5H638.2 M630.2 89.5H638.2" stroke="#a9a9a9" stroke-width="1"/>
<path d="M622 86.5H628 M625.4 83.9L628.2 86.5L625.4 89.1" fill="none" stroke="#a9a9a9" stroke-width="1.3"/>
<path d="M650.3 79.8V94.2 M647.8 82.4L650.3 79.8L652.8 82.4 M647.8 91.6L650.3 94.2L652.8 91.6" fill="none" stroke="#a9a9a9" stroke-width="1.1"/>
<path d="M654.3 82.5H661.9 M654.3 85.5H661.9 M654.3 88.5H661.9 M654.3 91.5H661.9" stroke="#a9a9a9" stroke-width="1"/>
<path d="M667.9 86.1L670.7 88.9L673.5 86.1" fill="none" stroke="#a9a9a9" stroke-width="1.2"/>
<path d="M684.3 72V86.5 M688.4 72V86.5 M692.4 80.3V86.5 M696.5 80.3V86.5" stroke="#a9a9a9" stroke-width="1"/>
<path d="M682.6999999999999 84.6L684.3 86.8L685.9 84.6" fill="none" stroke="#a9a9a9" stroke-width="1"/>
<path d="M686.8 84.6L688.4 86.8L690.0 84.6" fill="none" stroke="#a9a9a9" stroke-width="1"/>
<path d="M690.8 84.6L692.4 86.8L694.0 84.6" fill="none" stroke="#a9a9a9" stroke-width="1"/>
<path d="M694.9 84.6L696.5 86.8L698.1 84.6" fill="none" stroke="#a9a9a9" stroke-width="1"/>
<path d="M703.8 78.1L706.6 80.9L709.4 78.1" fill="none" stroke="#a9a9a9" stroke-width="1.2"/>
<path d="M688 95.9H683.8V108H688 M694.6 95.9H698.4V108H694.6" fill="none" stroke="#a9a9a9" stroke-width="1"/>
<path d="M691.4 94.4V99 M689.4 96.4L691.4 94.4L693.4 96.4 M691.4 104.6V109.6 M689.4 107.6L691.4 109.6L693.4 107.6" fill="none" stroke="#a9a9a9" stroke-width="1"/>
<path d="M686 100.5H696.2 M686 103.4H696.2" stroke="#c8c8c8" stroke-width="1"/>
<path d="M703.8 100.9L706.6 103.7L709.4 100.9" fill="none" stroke="#a9a9a9" stroke-width="1.2"/>
<path d="M683 117.1H693.8L697.6 121.2H687.4L685.4 123.6L687.4 126.5H682.9L686.4 121.6z" fill="#b4b4b4"/>
<rect x="688.6" y="123.6" width="9.8" height="8.6" fill="#f1ebf1" stroke="#a9a9a9" stroke-width="1"/>
<path d="M690.6 126.4H691.8 M693 126.4H696.4 M690.6 129.4H691.8 M693 129.4H696.4" stroke="#c4b8c4" stroke-width="0.9"/>
<path d="M703.8 124.2L706.6 127.0L709.4 124.2" fill="none" stroke="#a9a9a9" stroke-width="1.2"/>
<path d="M520 113.5H534 M520 119.5H534" stroke="#a9a9a9" stroke-width="1"/>
<path d="M520 116.5H530 M520 122.5H530" stroke="#a9a9a9" stroke-width="1"/>
<path d="M544 113.5H557.8 M544 119.5H557.8" stroke="#a9a9a9" stroke-width="1"/>
<path d="M546 116.5H555.8 M546 122.5H555.8" stroke="#a9a9a9" stroke-width="1"/>
<path d="M568 113.5H582 M568 119.5H582" stroke="#a9a9a9" stroke-width="1"/>
<path d="M572 116.5H582 M572 122.5H582" stroke="#a9a9a9" stroke-width="1"/>
<path d="M592 113.5H606 M592 116.5H606 M592 119.5H606 M592 122.5H606" stroke="#a9a9a9" stroke-width="1"/>
<path d="M615.5 110V125 M630.5 110V125" stroke="#a9a9a9" stroke-width="1"/>
<path d="M617.4 112.4H628.6 M619.4 110.6L617.4 112.4L619.4 114.2 M626.6 110.6L628.6 112.4L626.6 114.2" fill="none" stroke="#a9a9a9" stroke-width="1"/>
<path d="M617.4 116.5H628.6 M617.4 118.5H628.6 M617.4 120.5H628.6 M617.4 122.5H628.6 M617.4 124.5H628.6" stroke="#a9a9a9" stroke-width="0.9"/>
<path d="M647.1 113.5H652.9 M647.1 116.5H652.9 M647.1 119.5H652.9 M647.1 122.5H652.9" stroke="#a9a9a9" stroke-width="1"/>
<path d="M654.3 113.5H660 M654.3 116.5H660 M654.3 119.5H660 M654.3 122.5H660" stroke="#a9a9a9" stroke-width="1"/>
<path d="M666.6 117.0L669.4 119.8L672.2 117.0" fill="none" stroke="#a9a9a9" stroke-width="1.2"/>
<path d="M712 151V146.5H717 M714.5 149L719.5 154 M716 154H719.5V150.5" fill="none" stroke="#a6a6a6" stroke-width="1"/>
<circle cx="758.6" cy="81" r="8.4" fill="#f8f8f8" stroke="#4a7ebb" stroke-width="1"/>
<rect x="738.9" y="76.8" width="15.8" height="15.8" fill="#f8f8f8" stroke="#4a7ebb" stroke-width="1"/>
<path d="M752.7 83.8L761.2 92.2L752.7 100.8L744.2 92.2z" fill="#fcfcfc" stroke="#4a7ebb" stroke-width="1"/>
<path d="M751.6 127.1L754.4 129.9L757.2 127.1" fill="none" stroke="#3b3b3b" stroke-width="1.4"/>
<path d="M789 77H803.8V92H796V95.7H785.2V81H789z" fill="#ebc06d"/>
<rect x="781.7" y="73.6" width="11" height="10.6" fill="#fff" stroke="#737373" stroke-width="1"/>
<rect x="796.6" y="88.6" width="11" height="10.6" fill="#fff" stroke="#737373" stroke-width="1"/>
<path d="M793.7 127.1L796.5 129.9L799.3 127.1" fill="none" stroke="#3b3b3b" stroke-width="1.4"/>
<rect x="829.9" y="74.7" width="24.6" height="24.5" rx="5" fill="#f4f1f6" stroke="#b4b4b4" stroke-width="1.1"/>
<path d="M857.7 80.9L857.8 87L852.8 92.9L850.8 94.8L848.8 95.4L847.5 98.9Q845 101.6 842.7 101.9L836.2 102.7Q840 100 840.6 98.6Q842 96 846.2 94.3L848.2 92.2L850.1 90.2z" fill="#f3f3f3" stroke="#f3f3f3" stroke-width="2.6" stroke-linejoin="round"/>
<path d="M857.7 80.9L857.8 87L852.8 92.9L850.1 90.2z" fill="#a9a9a9"/>
<path d="M849.8 90.6L852.4 93.2L850.8 94.9L848.2 92.3z" fill="#9a9a9a"/>
<path d="M836.2 102.7L840.1 99.2Q841.6 96.4 844 95Q846.6 93.8 848.9 95.2L847.9 99Q846 101.4 842.7 102z" fill="#a9a9a9"/>
<path d="M843.4 98.2Q845.4 98 846.2 96.2" fill="none" stroke="#e4e4e4" stroke-width="0.8"/>
<path d="M858.7 126.8L861.5 129.6L864.3 126.8" fill="none" stroke="#a9a9a9" stroke-width="1.2"/>
<path d="M879.4 73.6L884.6 78.6L879.8 82.8L874.4 78.4z" fill="#f8f8f8" stroke="#a9a9a9" stroke-width="1"/>
<path d="M878.2 74.6Q878 71 879.6 71.2Q881 71.4 881 74.4" fill="none" stroke="#a9a9a9" stroke-width="0.9"/>
<path d="M882.8 75L887.2 77Q888.4 78.4 887.6 81.6Q886.4 79.4 884.8 78.6z" fill="#a6a6a6"/>
<rect x="872.1" y="83.5" width="15.9" height="3.1" fill="#dcdcdc"/>
<path d="M899.6 78.0L902.4 80.8L905.2 78.0" fill="none" stroke="#a9a9a9" stroke-width="1.2"/>
<path d="M882.4 94.9H872.7V104H876.2" fill="none" stroke="#a9a9a9" stroke-width="1"/>
<path d="M885.4 94.8L887.5 96.9L880.4 103.9L877 105.1L878.2 101.8z" fill="#a9a9a9"/>
<path d="M899.6 101.0L902.4 103.8L905.2 101.0" fill="none" stroke="#a9a9a9" stroke-width="1.2"/>
<path d="M872.3 125.7L872.8 128L880.4 130.2Q881.2 130.4 881.6 129.4L884.2 129L886.3 122.2L884.9 120L881.4 126.6z" fill="#b9b9b9"/>
<path d="M876.2 120.2H884.4Q885.2 120.2 884.9 121L882.2 126.2Q881.8 127 881 126.8L873 125.9Q872.2 125.7 872.6 125L875.4 120.8Q875.8 120.2 876.2 120.2z" fill="#f8f8f8" stroke="#b4b4b4" stroke-width="0.9"/>
<path d="M892.6 123.8L895.4 126.6L898.2 123.8" fill="none" stroke="#a9a9a9" stroke-width="1.2"/>
<path d="M911 151V146.5H916 M913.5 149L918.5 154 M915 154H918.5V150.5" fill="none" stroke="#a6a6a6" stroke-width="1"/>
<circle cx="943.9" cy="77.4" r="3.6" fill="#fdfdfd" stroke="#4a7ebb" stroke-width="1.5"/>
<path d="M941.2 80.2L936.2 84.2" stroke="#4a7ebb" stroke-width="2.3" stroke-linecap="round"/>
<path d="M935 103.6V106H937.4 M936 104.8L937.6 106L936 107.4" fill="none" stroke="#4a7ebb" stroke-width="1"/>
<path d="M992.6 101.2L995.4 104.0L998.2 101.2" fill="none" stroke="#3b3b3b" stroke-width="1.3"/>
<path d="M938.6 117.8V129.6L941.4 126.8L943.4 131.2L945 130.4L943.2 126.2L946.8 126z" fill="#fff" stroke="#5a5a5a" stroke-width="0.9" stroke-linejoin="miter"/>
<path d="M981.9 125.0L984.7 127.8L987.5 125.0" fill="none" stroke="#3b3b3b" stroke-width="1.3"/>
<defs><radialGradient id="og"><stop offset="0.72" stop-color="#ff9610"/><stop offset="1" stop-color="#ff9610" stop-opacity="0"/></radialGradient></defs>
<circle cx="1043.6" cy="85.7" r="5.9" fill="url(#og)"/>
<path d="M1100 153.4L1104.6 149.2L1109.2 153.4" fill="none" stroke="#3b3b3b" stroke-width="1.3"/>
<path d="M95.5 715.6Q92.6 714.4 89.9 715V724Q92.6 723.4 95.5 724.6Q98.4 723.4 101.7 724V720.6 M95.5 715.6V726.4 M93.8 724.8L95.5 726.6L97.2 724.8 M95.5 715.6Q98 714.5 100.6 714.8" fill="none" stroke="#6a6a6a" stroke-width="0.9"/>
<path d="M97.4 718.6L99 720.4L102.2 716.2" fill="none" stroke="#6a6a6a" stroke-width="1"/>
<path d="M176.4 715.8A5.4 5.4 0 0 0 177.6 726.4" fill="none" stroke="#6a6a6a" stroke-width="1.1" stroke-dasharray="2.4 1.4"/>
<path d="M178.6 715V720.8 M176.4 718.8L178.6 721L180.8 718.8 M181.4 716.6Q183.4 717.8 183.8 720" fill="none" stroke="#6a6a6a" stroke-width="1.1"/>
<path d="M180 722L187.4 728.4 M187.4 722L180 728.4" stroke="#333" stroke-width="1.5"/>
<path d="M611.4 715.2L613.9 718H608.9z" fill="#444"/><path d="M606 720.5H616.8 M606 723.5H616.8 M606 726.5H612.2" stroke="#444" stroke-width="1"/>
<path d="M669.6 714.4H680.4Q681.8 714.4 681.8 715.8V722.4Q681.8 723.8 680.4 723.8H674.6L671.2 727.2V723.8H669.6Q668.2 723.8 668.2 722.4V715.8Q668.2 714.4 669.6 714.4z" fill="#555"/>
<rect x="750.9" y="714.9" width="13" height="11.4" fill="none" stroke="#6a6a6a" stroke-width="1"/>
<path d="M753.7 715V726 M753.7 722.5H764" stroke="#6a6a6a" stroke-width="1" fill="none"/><rect x="756.9" y="717" width="4.4" height="2.4" fill="none" stroke="#6a6a6a" stroke-width="0.9"/>
<rect x="790.9" y="714.9" width="4.6" height="3.6" fill="none" stroke="#6a6a6a" stroke-width="1"/>
<rect x="790.9" y="722.9" width="4.6" height="3.6" fill="none" stroke="#6a6a6a" stroke-width="1"/>
<rect x="798.9" y="714.9" width="4.6" height="3.6" fill="none" stroke="#6a6a6a" stroke-width="1"/>
<rect x="798.9" y="722.9" width="4.6" height="3.6" fill="none" stroke="#6a6a6a" stroke-width="1"/>
<path d="M836.6 715.8Q833.6 714.2 830.8 714.9V724.6Q833.6 724 836.6 725.4Q839.6 724 842.4 724.6V714.9Q839.6 714.2 836.6 715.8z M836.6 715.8V727 M835.2 725.6L836.6 727.2L838 725.6" fill="none" stroke="#6a6a6a" stroke-width="0.9"/>
<path d="M832.2 717.2H835.2 M832.2 719.2H835.2 M832.2 721.2H835.2 M832.2 723H835.2 M838 717.2H841 M838 719.2H841 M838 721.2H841 M838 723H841" stroke="#6a6a6a" stroke-width="0.7"/>
<path d="M869.9 715.8H883.2" stroke="#6a6a6a" stroke-width="1.4"/><path d="M872.2 716.4V721.9H880.9V716.4 M874.2 718.8H879 M876.5 722V726.2 M873.7 726.4H879.3" fill="none" stroke="#6a6a6a" stroke-width="1"/>
<path d="M902.8 720.5H910.8" stroke="#444" stroke-width="1"/>
<path d="M916 721.5H1015.6" stroke="#5a5a5a" stroke-width="1"/>
<rect x="948.3" y="715.4" width="4.6" height="11.8" fill="#444"/>
<path d="M966.5 718.8V724.6" stroke="#5a5a5a" stroke-width="1"/>
<path d="M1021 720.5H1028.4 M1024.7 716.8V724.2" stroke="#444" stroke-width="1"/>
<rect x="1088.5" y="714.8" width="12" height="11.6" fill="none" stroke="#6a6a6a" stroke-width="1"/>
<path d="M1094.5 716V719 M1093.3 717.2L1094.5 716L1095.7 717.2 M1094.5 725.2V722.2 M1093.3 724L1094.5 725.2L1095.7 724 M1089.8 720.6H1092.8 M1091 719.4L1089.8 720.6L1091 721.8 M1099.2 720.6H1096.2 M1098 719.4L1099.2 720.6L1098 721.8" fill="none" stroke="#6a6a6a" stroke-width="0.8"/>
<path d="M1105.9 688.8L1109.5 684.9L1113 688.8z" fill="#222"/><path d="M1105.9 699L1113 699L1109.5 702.9z" fill="#222"/>
</svg>
<span class="t" style="left:471.8px;top:9.7px;font-size:12.8px;color:#fff;transform:scaleX(0.7801);">プレゼンテーション1</span>
<span class="t" style="left:568.65px;top:9.45px;font-size:12px;color:#fff;font-weight:400;">-</span>
<span class="t" style="left:581.15px;top:10.15px;font-size:13px;color:#fff;transform:scaleX(0.9774);font-weight:400;">PowerPoint</span>
<span class="t" style="left:867.85px;top:8.25px;font-size:12.8px;color:#b7472a;transform:scaleX(0.7809);">サインイン</span>
<span class="t" style="left:14.0px;top:40.5px;font-size:12.8px;color:#fff;transform:scaleX(0.7681);">ファイル</span>
<span class="t" style="left:75.2px;top:41.0px;font-size:12.8px;color:#b7472a;transform:scaleX(0.8024);">ホーム</span>
<span class="t" style="left:131.7px;top:41.5px;font-size:12px;color:#fff;transform:scaleX(1.0011);font-weight:400;">挿入</span>
<span class="t" style="left:183.0px;top:41.5px;font-size:12px;color:#fff;font-weight:400;">描画</span>
<span class="t" style="left:233.95px;top:41.0px;font-size:12.8px;color:#fff;transform:scaleX(0.8194);">デザイン</span>
<span class="t" style="left:297.6px;top:41.5px;font-size:12px;color:#fff;transform:scaleX(0.9716);font-weight:400;">画面切り替え</span>
<span class="t" style="left:390.1px;top:40.0px;font-size:12.8px;color:#fff;transform:scaleX(0.7722);">アニメーション</span>
<span class="t" style="left:479.2px;top:40.5px;font-size:12.8px;color:#fff;transform:scaleX(0.7779);">スライド ショー</span>
<span class="t" style="left:571.0px;top:41.5px;font-size:12px;color:#fff;transform:scaleX(0.9583);font-weight:400;">記録</span>
<span class="t" style="left:620.85px;top:41.5px;font-size:12px;color:#fff;letter-spacing:0.800px;font-weight:400;">校閲</span>
<span class="t" style="left:671.7px;top:41.5px;font-size:12px;color:#fff;transform:scaleX(1.0011);font-weight:400;">表示</span>
<span class="t" style="left:722.2px;top:41.5px;font-size:12.8px;color:#fff;transform:scaleX(0.8061);">ヘルプ</span>
<span class="t" style="left:808.7px;top:40.75px;font-size:12px;color:#fff;transform:scaleX(0.8658);">何をしますか</span>
<span class="t" style="left:11.35px;top:104.25px;font-size:12px;color:#262626;transform:scaleX(0.9002);">貼り付け</span>
<span class="t" style="left:17.15px;top:140.5px;font-size:12.8px;color:#262626;transform:scaleX(0.7630);">クリップボード</span>
<span class="t" style="left:128.5px;top:104.6px;font-size:12px;color:#262626;transform:scaleX(0.9097);font-weight:400;">新しい</span>
<span class="t" style="left:120.3px;top:118.75px;font-size:12.8px;color:#262626;transform:scaleX(0.7727);">スライド</span>
<span class="t" style="left:143.6px;top:140.35px;font-size:12.8px;color:#262626;transform:scaleX(0.7959);">スライド</span>
<span class="t" style="left:336.3px;top:140.0px;font-size:12.8px;color:#262626;transform:scaleX(0.8007);">フォント</span>
<span class="t" style="left:372.5px;top:78.05px;font-size:12.5px;color:#a6a6a6;transform:scaleX(1.0025);font-weight:400;">18</span>
<span class="t" style="left:596.55px;top:141.0px;font-size:12px;color:#262626;transform:scaleX(0.9799);font-weight:400;">段落</span>
<span class="t" style="left:740.9px;top:104.25px;font-size:12px;color:#262626;letter-spacing:0.800px;font-weight:400;">図形</span>
<span class="t" style="left:781.9px;top:104.25px;font-size:12px;color:#262626;transform:scaleX(1.0442);font-weight:400;">配置</span>
<span class="t" style="left:825.1px;top:104.35px;font-size:12.8px;color:#a6a6a6;transform:scaleX(0.7446);">クイック</span>
<span class="t" style="left:818.5px;top:119.95px;font-size:12.8px;color:#a6a6a6;transform:scaleX(0.7609);">スタイル</span>
<span class="t" style="left:790.6px;top:141.0px;font-size:12px;color:#262626;transform:scaleX(1.0002);font-weight:400;">図形描画</span>
<span class="t" style="left:952.9px;top:71.9px;font-size:12px;color:#262626;transform:scaleX(1.0011);font-weight:400;">検索</span>
<span class="t" style="left:952.4px;top:94.75px;font-size:12px;color:#262626;letter-spacing:0.600px;font-weight:400;">置換</span>
<span class="t" style="left:952.9px;top:117.5px;font-size:12px;color:#262626;transform:scaleX(1.0011);font-weight:400;">選択</span>
<span class="t" style="left:957.55px;top:140.5px;font-size:12px;color:#262626;transform:scaleX(0.9801);font-weight:400;">編集</span>
<span class="t" style="left:1035.55px;top:105.0px;font-size:12.8px;color:#262626;transform:scaleX(0.7872);">アド</span>
<span class="t" style="left:1037.0px;top:119.2px;font-size:12.8px;color:#262626;transform:scaleX(0.6835);">イン</span>
<span class="t" style="left:1026.75px;top:140.0px;font-size:12.8px;color:#262626;transform:scaleX(0.7844);">アドイン</span>
<span class="t" style="left:14.05px;top:172.4px;font-size:15px;color:#c0502f;font-weight:400;">1</span>
<span class="t" style="left:536.5px;top:223.55px;font-size:15px;color:#595959;letter-spacing:4.657px;font-weight:300;word-spacing:-4.5px;">グラフ タイトル</span>
<span class="t" style="left:853.55px;top:250.7px;font-size:9.5px;color:#595959;letter-spacing:1.200px;font-weight:400;">系列1</span>
<span class="t" style="left:865.9px;top:297.1px;font-size:10px;color:#595959;font-weight:400;">1</span>
<span class="t" style="left:813.5px;top:585.25px;font-size:5.5px;color:#757575;transform:scaleX(1.0006);font-weight:400;">提供元: Bing</span>
<span class="t" style="left:763.0px;top:591.9px;font-size:5.5px;color:#757575;letter-spacing:0.114px;font-weight:400;">© GeoNames, Microsoft, Zenrin</span>
<span class="t" style="left:104.0px;top:683.55px;font-size:14px;color:#6a6a6a;transform:scaleX(0.9468);font-weight:400;">ノートを入力</span>
<span class="t" style="left:10.45px;top:711.65px;font-size:12.8px;color:#262626;transform:scaleX(0.8849);">スライド 1/1</span>
<span class="t" style="left:119.25px;top:712.0px;font-size:12px;color:#262626;transform:scaleX(1.0152);font-weight:400;">日本語</span>
<span class="t" style="left:190.4px;top:711.9px;font-size:12px;color:#262626;transform:scaleX(0.9477);font-weight:500;">アクセシビリティ: 検討が必要です</span>
<span class="t" style="left:621.75px;top:711.5px;font-size:12.8px;color:#262626;transform:scaleX(0.8232);">ノート</span>
<span class="t" style="left:684.0px;top:711.5px;font-size:12.8px;color:#262626;transform:scaleX(0.7674);">コメント</span>
<span class="t" style="left:1042.6px;top:711.15px;font-size:12.5px;color:#262626;font-weight:400;">69%</span>
<span class="t" style="left:226.7px;top:107.9px;font-size:12px;color:#a6a6a6;font-weight:700;">B</span>
<span class="t" style="left:252.6px;top:108.4px;font-size:14px;color:#a6a6a6;font-weight:700;font-style:italic;font-family:'Liberation Serif',serif;">I</span>
<span class="t" style="left:275.35px;top:107.9px;font-size:12px;color:#a6a6a6;font-weight:700;">U</span>
<span class="t" style="left:300.15px;top:108.0px;font-size:12px;color:#a6a6a6;font-weight:700;text-shadow:1.5px 1.5px 1px #c8c8c8;">S</span>
<span class="t" style="left:319.95px;top:108.2px;font-size:11px;color:#a6a6a6;transform:scaleX(0.9200);font-weight:400;">abc</span>
<span class="t" style="left:344.2px;top:106.05px;font-size:10px;color:#a6a6a6;letter-spacing:0.800px;font-weight:400;">AV</span>
<span class="t" style="left:382.0px;top:108.0px;font-size:12px;color:#a6a6a6;font-weight:400;">Aa</span>
<span class="t" style="left:429.7px;top:78.0px;font-size:14px;color:#a6a6a6;font-weight:400;">A</span>
<span class="t" style="left:454.4px;top:79.0px;font-size:11px;color:#a6a6a6;font-weight:400;">A</span>
<span class="t" style="left:469.2px;top:107.35px;font-size:14.5px;color:#a6a6a6;font-weight:400;">A</span>
<span class="t" style="left:691.3px;top:64.7px;font-size:10.5px;color:#a6a6a6;font-weight:400;">A</span>
<span class="t" style="left:426.95px;top:104.0px;font-size:9.5px;color:#a6a6a6;transform:scaleX(0.8684);font-weight:700;">ab</span>
<span class="t" style="left:482.25px;top:74.0px;font-size:10.5px;color:#a6a6a6;font-weight:400;">A</span>
<span class="t" style="left:558.6px;top:70.3px;font-size:6px;color:#a6a6a6;font-weight:700;">1</span>
<span class="t" style="left:558.8px;top:76.4px;font-size:6px;color:#a6a6a6;font-weight:700;">2</span>
<span class="t" style="left:558.8px;top:82.5px;font-size:6px;color:#a6a6a6;font-weight:700;">3</span>
<span class="t" style="left:934.05px;top:88.75px;font-size:9.5px;color:#737373;font-weight:400;">a</span>
<span class="t" style="left:940.3px;top:88.85px;font-size:9.5px;color:#a65fc0;font-weight:400;">b</span>
<span class="t" style="left:939.15px;top:95.65px;font-size:9.5px;color:#737373;font-weight:400;">a</span>
<span class="t" style="left:945.55px;top:95.65px;font-size:9.5px;color:#4a7ebb;font-weight:400;">c</span>
<div id="bl"></div>
<div id="br"></div>
<div id="bb1"></div>
<div id="bb2"></div>
<div id="bb3"></div>
<div id="edge"></div>
</div>
</body>
</html>
